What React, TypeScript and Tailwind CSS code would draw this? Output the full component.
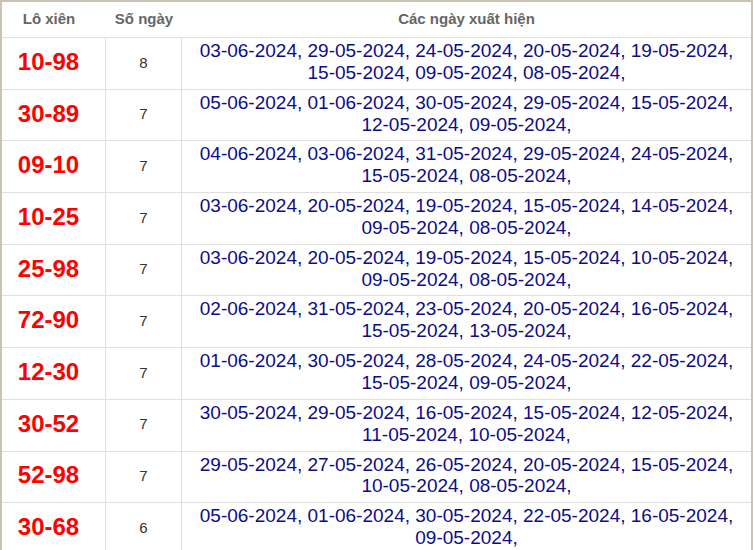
import React from "react";

const rows: { pair: string; count: number; dates: string[] }[] = [
  { pair: "10-98", count: 8, dates: ["03-06-2024", "29-05-2024", "24-05-2024", "20-05-2024", "19-05-2024", "15-05-2024", "09-05-2024", "08-05-2024"] },
  { pair: "30-89", count: 7, dates: ["05-06-2024", "01-06-2024", "30-05-2024", "29-05-2024", "15-05-2024", "12-05-2024", "09-05-2024"] },
  { pair: "09-10", count: 7, dates: ["04-06-2024", "03-06-2024", "31-05-2024", "29-05-2024", "24-05-2024", "15-05-2024", "08-05-2024"] },
  { pair: "10-25", count: 7, dates: ["03-06-2024", "20-05-2024", "19-05-2024", "15-05-2024", "14-05-2024", "09-05-2024", "08-05-2024"] },
  { pair: "25-98", count: 7, dates: ["03-06-2024", "20-05-2024", "19-05-2024", "15-05-2024", "10-05-2024", "09-05-2024", "08-05-2024"] },
  { pair: "72-90", count: 7, dates: ["02-06-2024", "31-05-2024", "23-05-2024", "20-05-2024", "16-05-2024", "15-05-2024", "13-05-2024"] },
  { pair: "12-30", count: 7, dates: ["01-06-2024", "30-05-2024", "28-05-2024", "24-05-2024", "22-05-2024", "15-05-2024", "09-05-2024"] },
  { pair: "30-52", count: 7, dates: ["30-05-2024", "29-05-2024", "16-05-2024", "15-05-2024", "12-05-2024", "11-05-2024", "10-05-2024"] },
  { pair: "52-98", count: 7, dates: ["29-05-2024", "27-05-2024", "26-05-2024", "20-05-2024", "15-05-2024", "10-05-2024", "08-05-2024"] },
  { pair: "30-68", count: 6, dates: ["05-06-2024", "01-06-2024", "30-05-2024", "22-05-2024", "16-05-2024", "09-05-2024"] },
];

export default function App() {
  return (
    <div className="w-[753px] h-[550px] overflow-hidden bg-white font-['Liberation_Sans',Arial,sans-serif]">
      <div className="border-l-2 border-t-2 border-r-2 border-[#cbc1b5]">
        <div className="grid grid-cols-[104px_76px_1fr] border-b border-[#e0e0e0] h-[36px] text-[15px] font-bold text-[#666]">
          <div className="flex items-center justify-center pr-[10px] pb-[1px]">Lô xiên</div>
          <div className="flex items-center justify-center pb-[1px]">Số ngày</div>
          <div className="flex items-center justify-center pb-[1px]">Các ngày xuất hiện</div>
        </div>
        {rows.map((r) => (
          <div key={r.pair} className="grid grid-cols-[104px_76px_1fr] border-b border-[#e0e0e0]">
            <div className="flex items-center justify-center pr-[10px] pt-[2px] pb-[5px] border-r border-[#e0e0e0] text-[24px] font-bold text-[#ff0000]">
              {r.pair}
            </div>
            <div className="flex items-center justify-center pt-[3px] pb-[4px] border-r border-[#e0e0e0] text-[15px] text-[#333]">
              {r.count}
            </div>
            <div className="px-[6px] pt-[2px] pb-[5px] text-center text-[19px] leading-[21.85px] text-[#0c0c8a]">
              {r.dates.map((d) => d + ", ").join("")}
            </div>
          </div>
        ))}
      </div>
    </div>
  );
}
